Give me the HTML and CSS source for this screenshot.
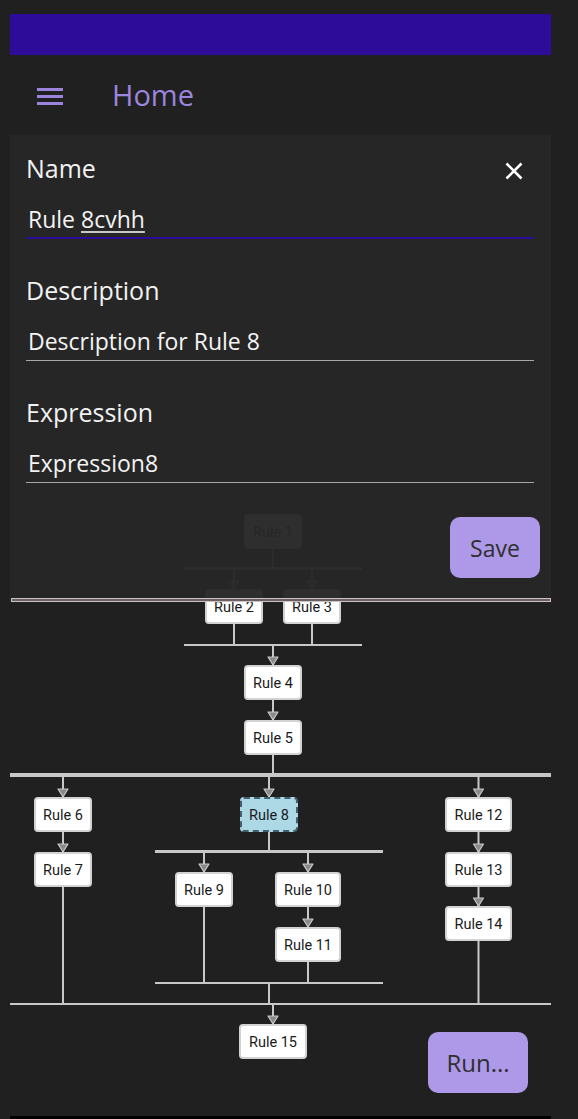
FILE: index.html
```html
<!DOCTYPE html>
<html>
<head>
<meta charset="utf-8">
<link rel="stylesheet" href="styles.css">
</head>
<body>
<div class="app">
  <div class="topbar"></div>
  <header class="header">
    <svg class="menu" width="26" height="17" viewBox="0 0 26 17">
      <rect x="0" y="0" width="26" height="3" fill="#9a84dc"/>
      <rect x="0" y="7" width="26" height="3" fill="#9a84dc"/>
      <rect x="0" y="14" width="26" height="3" fill="#9a84dc"/>
    </svg>
    <h1 class="title">Home</h1>
  </header>
  <main class="main">
    <div class="diagram">
      <svg class="wires" width="541" height="981" viewBox="0 0 541 981">
        <g stroke="#c8c8c8" stroke-width="2" fill="none">
          <line x1="263" y1="414" x2="263" y2="432"/>
          <line x1="224" y1="435" x2="224" y2="454"/>
          <line x1="302" y1="435" x2="302" y2="454"/>
          <line x1="224" y1="489" x2="224" y2="509"/>
          <line x1="302" y1="489" x2="302" y2="509"/>
          <line x1="263" y1="511" x2="263" y2="530"/>
          <line x1="263" y1="565" x2="263" y2="585"/>
          <line x1="263" y1="620" x2="263" y2="638"/>
          <line x1="53" y1="642" x2="53" y2="662"/>
          <line x1="259" y1="642" x2="259" y2="662"/>
          <line x1="468.5" y1="642" x2="468.5" y2="662"/>
          <line x1="53" y1="697" x2="53" y2="717"/>
          <line x1="53" y1="752" x2="53" y2="868"/>
          <line x1="259" y1="697" x2="259" y2="715"/>
          <line x1="194" y1="718" x2="194" y2="737"/>
          <line x1="298" y1="718" x2="298" y2="737"/>
          <line x1="194" y1="772" x2="194" y2="847"/>
          <line x1="298" y1="772" x2="298" y2="792"/>
          <line x1="298" y1="827" x2="298" y2="847"/>
          <line x1="259" y1="849" x2="259" y2="868"/>
          <line x1="468.5" y1="697" x2="468.5" y2="717"/>
          <line x1="468.5" y1="752" x2="468.5" y2="771"/>
          <line x1="468.5" y1="806" x2="468.5" y2="868"/>
          <line x1="263" y1="870" x2="263" y2="889"/>
        </g>
        <g fill="#c8c8c8">
          <rect x="174" y="432" width="178" height="3"/>
          <rect x="174" y="509" width="178" height="2"/>
          <rect x="0" y="638" width="541" height="4"/>
          <rect x="145" y="715" width="228" height="3"/>
          <rect x="145" y="847" width="228" height="2"/>
          <rect x="0" y="868" width="541" height="2"/>
        </g>
        <g fill="#8a8a8a" stroke="#c8c8c8" stroke-width="1.2" stroke-linejoin="round">
          <polygon points="219,446 229,446 224,454"/>
          <polygon points="297,446 307,446 302,454"/>
          <polygon points="258,522 268,522 263,530"/>
          <polygon points="258,577 268,577 263,585"/>
          <polygon points="48,654 58,654 53,662"/>
          <polygon points="254,654 264,654 259,662"/>
          <polygon points="463.5,654 473.5,654 468.5,662"/>
          <polygon points="48,709 58,709 53,717"/>
          <polygon points="189,729 199,729 194,737"/>
          <polygon points="293,729 303,729 298,737"/>
          <polygon points="293,784 303,784 298,792"/>
          <polygon points="463.5,709 473.5,709 468.5,717"/>
          <polygon points="463.5,763 473.5,763 468.5,771"/>
          <polygon points="258,881 268,881 263,889"/>
        </g>
      </svg>
      <div class="node" style="left:234px;top:379px;width:58px">Rule 1</div>
      <div class="node" style="left:195px;top:454px;width:58px">Rule 2</div>
      <div class="node" style="left:273px;top:454px;width:58px">Rule 3</div>
      <div class="node" style="left:234px;top:530px;width:58px">Rule 4</div>
      <div class="node" style="left:234px;top:585px;width:58px">Rule 5</div>
      <div class="node" style="left:24px;top:662px;width:58px">Rule 6</div>
      <div class="node selected" style="left:230px;top:662px;width:58px">Rule 8</div>
      <div class="node" style="left:435px;top:662px;width:67px">Rule 12</div>
      <div class="node" style="left:24px;top:717px;width:58px">Rule 7</div>
      <div class="node" style="left:165px;top:737px;width:58px">Rule 9</div>
      <div class="node" style="left:265px;top:737px;width:66px">Rule 10</div>
      <div class="node" style="left:265px;top:792px;width:66px">Rule 11</div>
      <div class="node" style="left:435px;top:717px;width:67px">Rule 13</div>
      <div class="node" style="left:435px;top:771px;width:67px">Rule 14</div>
      <div class="node" style="left:229px;top:889px;width:68px">Rule 15</div>
      <button class="run">Run...</button>
    </div>
    <section class="panel">
      <div class="field">
        <div class="field-head">
          <label class="label">Name</label>
          <svg class="close" width="18" height="18" viewBox="0 0 18 18">
            <path d="M1.5 1.5 L16.5 16.5 M16.5 1.5 L1.5 16.5" stroke="#fff" stroke-width="2.6" fill="none"/>
          </svg>
        </div>
        <div class="input focused">Rule <span class="spell">8cvhh</span></div>
      </div>
      <div class="field">
        <label class="label">Description</label>
        <div class="input">Description for Rule 8</div>
      </div>
      <div class="field">
        <label class="label">Expression</label>
        <div class="input">Expression8</div>
      </div>
      <div class="actions">
        <button class="save">Save</button>
      </div>
    </section>
    <div class="panel-edge"></div>
  </main>
  <div class="scrollbar"></div>
</div>
</body>
</html>
```
FILE: styles.css
```css
html, body {
  margin: 0;
  padding: 0;
  background: #202020;
}
body {
  font-family: "Open Sans", "Noto Sans", sans-serif;
  width: 578px;
  height: 1119px;
  overflow: hidden;
}
.app {
  margin-left: 10px;
  width: 541px;
  padding-top: 14px;
}
.topbar {
  height: 41px;
  background: #2d0c99;
}
.header {
  height: 80px;
  display: flex;
  align-items: center;
  padding-left: 27px;
  box-sizing: border-box;
}
.menu {
  display: block;
  margin-top: 2px;
}
.title {
  margin: 0 0 0 49px;
  font-size: 29px;
  font-weight: 500;
  color: #9b85de;
  line-height: 40px;
}
.main {
  position: relative;
  height: 981px;
}
.diagram {
  position: relative;
  height: 981px;
}
.wires {
  position: absolute;
  left: 0;
  top: 0;
  display: block;
}
.node {
  position: absolute;
  height: 35px;
  box-sizing: border-box;
  padding-top: 1px;
  background: #ffffff;
  border: 2px solid #d2d2d2;
  border-radius: 4px;
  font-family: Roboto, "Liberation Sans", sans-serif;
  font-size: 14.5px;
  color: #1a1a1a;
  display: flex;
  align-items: center;
  justify-content: center;
  white-space: nowrap;
}
.node.selected {
  background: #add8e6;
  border: 2px dashed #41606f;
}
.run {
  position: absolute;
  right: 23px;
  bottom: 23px;
  width: 100px;
  height: 61px;
  border: none;
  border-radius: 10px;
  background: #ae99e9;
  color: #2f2f2f;
  font-family: "Open Sans", "Noto Sans", sans-serif;
  font-size: 24px;
  padding: 0;
}
.panel {
  position: absolute;
  left: 0;
  top: 0;
  width: 541px;
  height: 463px;
  box-sizing: border-box;
  padding: 17px 17px 0 16px;
  background: rgba(38, 38, 38, 0.965);
  display: flex;
  flex-direction: column;
}
.field + .field {
  margin-top: 35px;
}
.field-head {
  display: flex;
  justify-content: space-between;
  align-items: flex-start;
}
.close {
  display: block;
  margin-top: 10px;
  margin-right: 11px;
}
.label {
  display: block;
  font-size: 25px;
  line-height: 32px;
  color: #f2f2f2;
}
.input {
  margin-top: 20px;
  padding: 0 0 4px 2px;
  font-size: 23px;
  line-height: 30px;
  color: #f4f4f4;
  border-bottom: 1px solid #a8a8a8;
}
.input.focused {
  padding-bottom: 3px;
  border-bottom: 2px solid #2d0c99;
}
.spell {
  text-decoration: underline;
  text-decoration-color: #c8c8c8;
  text-underline-offset: 3px;
}
.actions {
  display: flex;
  justify-content: flex-end;
  margin-top: 34px;
  margin-right: -6px;
}
.save {
  width: 90px;
  height: 61px;
  border: none;
  border-radius: 10px;
  background: #ae99e9;
  color: #2f2f2f;
  font-family: "Open Sans", "Noto Sans", sans-serif;
  font-size: 23px;
  padding: 0;
}
.panel-edge {
  position: absolute;
  left: 1px;
  top: 463px;
  width: 540px;
  height: 4px;
  box-sizing: border-box;
  border: 1px solid #cbc1c1;
  background: #6a6262;
}
.scrollbar {
  height: 3px;
  background: #000;
}
```
